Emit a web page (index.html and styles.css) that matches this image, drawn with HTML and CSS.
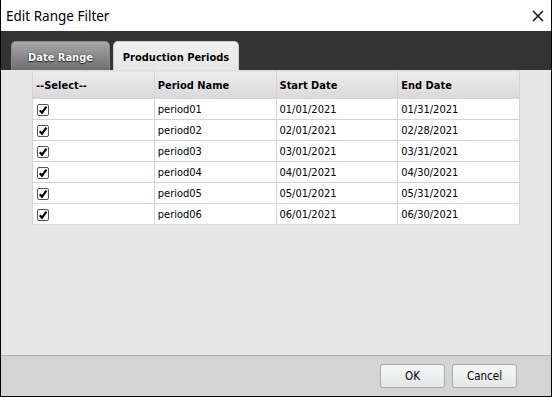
FILE: index.html
```html
<!DOCTYPE html>
<html>
<head>
<meta charset="utf-8">
<link rel="stylesheet" href="styles.css">
</head>
<body>
<div class="dialog">
  <div class="titlebar">
    <span class="title">Edit Range Filter</span>
    <svg class="close" width="12" height="12" viewBox="0 0 12 12"><path d="M1 1 L11 11 M11 1 L1 11" stroke="#111827" stroke-width="1.6" fill="none"/></svg>
  </div>
  <div class="tabbar">
    <div class="tab tab-inactive">Date Range</div>
    <div class="tab tab-active">Production Periods</div>
  </div>
  <div class="content">
    <table class="grid">
      <thead>
        <tr><th>--Select--</th><th>Period Name</th><th>Start Date</th><th>End Date</th></tr>
      </thead>
      <tbody>
        <tr><td><span class="cb"><svg viewBox="0 0 10 10"><path d="M1.8 5.2 L4 7.8 L8.4 1.6" stroke="#000" stroke-width="2.2" fill="none"/></svg></span></td><td>period01</td><td>01/01/2021</td><td>01/31/2021</td></tr>
        <tr><td><span class="cb"><svg viewBox="0 0 10 10"><path d="M1.8 5.2 L4 7.8 L8.4 1.6" stroke="#000" stroke-width="2.2" fill="none"/></svg></span></td><td>period02</td><td>02/01/2021</td><td>02/28/2021</td></tr>
        <tr><td><span class="cb"><svg viewBox="0 0 10 10"><path d="M1.8 5.2 L4 7.8 L8.4 1.6" stroke="#000" stroke-width="2.2" fill="none"/></svg></span></td><td>period03</td><td>03/01/2021</td><td>03/31/2021</td></tr>
        <tr><td><span class="cb"><svg viewBox="0 0 10 10"><path d="M1.8 5.2 L4 7.8 L8.4 1.6" stroke="#000" stroke-width="2.2" fill="none"/></svg></span></td><td>period04</td><td>04/01/2021</td><td>04/30/2021</td></tr>
        <tr><td><span class="cb"><svg viewBox="0 0 10 10"><path d="M1.8 5.2 L4 7.8 L8.4 1.6" stroke="#000" stroke-width="2.2" fill="none"/></svg></span></td><td>period05</td><td>05/01/2021</td><td>05/31/2021</td></tr>
        <tr><td><span class="cb"><svg viewBox="0 0 10 10"><path d="M1.8 5.2 L4 7.8 L8.4 1.6" stroke="#000" stroke-width="2.2" fill="none"/></svg></span></td><td>period06</td><td>06/01/2021</td><td>06/30/2021</td></tr>
      </tbody>
    </table>
  </div>
  <div class="footer">
    <button class="btn">OK</button>
    <button class="btn">Cancel</button>
  </div>
</div>
</body>
</html>
```
FILE: styles.css
```css
* { box-sizing: border-box; }
html, body { margin: 0; padding: 0; background: #fff; }
.dialog {
  width: 552px;
  height: 397px;
  border: 1px solid #000;
  border-top: none;
  display: flex;
  flex-direction: column;
  font-family: "DejaVu Sans Condensed", "DejaVu Sans", sans-serif;
  font-stretch: semi-condensed;
  font-size: 11px;
  color: #000;
}
.titlebar {
  height: 31px;
  flex: none;
  background: #fff;
  display: flex;
  align-items: center;
  justify-content: space-between;
  padding: 0 6px 0 5px;
}
.title {
  font-family: "Noto Sans", sans-serif;
  font-stretch: normal;
  font-size: 13.5px;
  color: #000;
}
.close { margin-right: 1px; }
.tabbar {
  height: 39px;
  flex: none;
  background: #333333;
  display: flex;
  align-items: flex-end;
  gap: 3px;
  padding-left: 10px;
}
.tab {
  height: 29px;
  border-radius: 5px 5px 0 0;
  font-weight: bold;
  display: flex;
  align-items: center;
  justify-content: center;
  padding-top: 2px;
}
.tab-inactive {
  width: 99px;
  background: linear-gradient(#a8a8a8, #6e6e6e);
  color: #fff;
  text-shadow: 0 1px 1px #222, 0 0 2px #333;
  border: 1px solid #8a8a8a;
  border-bottom: none;
}
.tab-active {
  width: 126px;
  background: linear-gradient(#f0f0f0, #e6e6e6);
  color: #000;
  text-shadow: 0 0 1px #fff;
  border: 1px solid #cfcfcf;
  border-bottom: none;
}
.content {
  height: 285px;
  flex: none;
  background: #e6e6e6;
  padding-left: 31px;
}
.grid {
  border-collapse: collapse;
  table-layout: fixed;
  width: 488px;
  background: #fff;
}
.grid th, .grid td {
  border: 1px solid #d4d4d4;
  text-align: left;
  padding: 0 0 0 3px;
  overflow: hidden;
  white-space: nowrap;
}
.grid th {
  height: 28px;
  background: linear-gradient(#ececec, #d9d9d9);
  font-weight: bold;
  text-shadow: 0 0 1px #fff;
  padding-top: 2px;
}
.grid thead tr th { border-top-color: #e0e0e0; }
.grid td { height: 21px; padding-top: 1px; }
.cb {
  display: inline-flex;
  width: 12px;
  height: 12px;
  border: 1px solid #555;
  border-radius: 2px;
  background: #fff;
  align-items: center;
  justify-content: center;
  vertical-align: middle;
  margin-left: 1px;
}
.cb svg { width: 10px; height: 10px; }
.footer {
  flex: 1;
  background: #d4d4d4;
  border-top: 1px solid #b0b0b0;
  display: flex;
  align-items: center;
  justify-content: flex-end;
  gap: 7px;
  padding-right: 34px;
}
.btn {
  width: 65px;
  height: 24px;
  border: 1px solid #a9a9a9;
  border-radius: 3px;
  background: linear-gradient(#f7f7f7, #e3e6ea);
  font-family: "DejaVu Sans Condensed", "DejaVu Sans", sans-serif;
  font-stretch: semi-condensed;
  font-size: 11.5px;
  color: #000;
  padding: 0;
}
```
